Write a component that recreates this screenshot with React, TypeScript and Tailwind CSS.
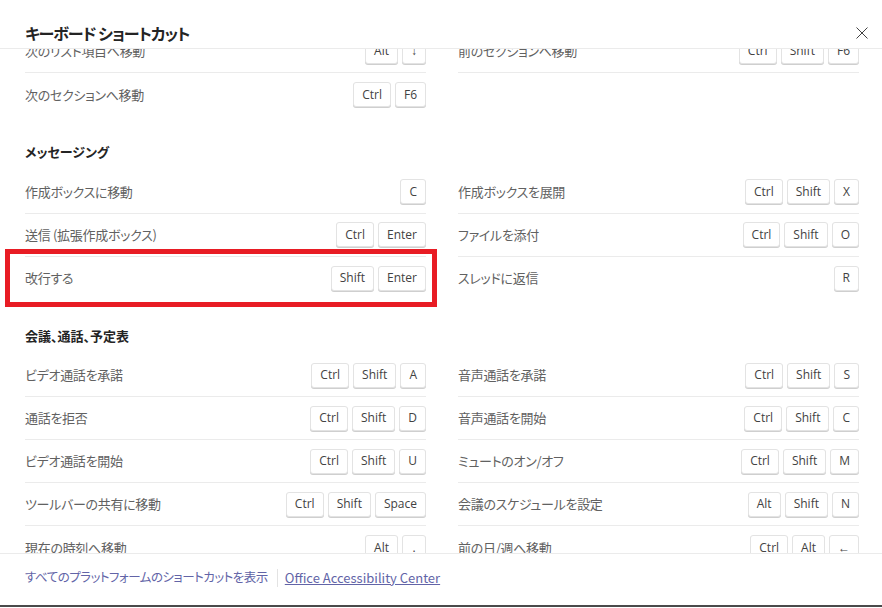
import React from "react";

type Item = { label: string; keys: string[]; highlight?: boolean };
type Section = { title?: string; items: Item[] };

const sections: Section[] = [
  {
    items: [
      { label: "次のリスト項目へ移動", keys: ["Alt", "↓"] },
      { label: "前のセクションへ移動", keys: ["Ctrl", "Shift", "F6"] },
      { label: "次のセクションへ移動", keys: ["Ctrl", "F6"] },
    ],
  },
  {
    title: "メッセージング",
    items: [
      { label: "作成ボックスに移動", keys: ["C"] },
      { label: "作成ボックスを展開", keys: ["Ctrl", "Shift", "X"] },
      { label: "送信 (拡張作成ボックス)", keys: ["Ctrl", "Enter"] },
      { label: "ファイルを添付", keys: ["Ctrl", "Shift", "O"] },
      { label: "改行する", keys: ["Shift", "Enter"], highlight: true },
      { label: "スレッドに返信", keys: ["R"] },
    ],
  },
  {
    title: "会議、通話、予定表",
    items: [
      { label: "ビデオ通話を承諾", keys: ["Ctrl", "Shift", "A"] },
      { label: "音声通話を承諾", keys: ["Ctrl", "Shift", "S"] },
      { label: "通話を拒否", keys: ["Ctrl", "Shift", "D"] },
      { label: "音声通話を開始", keys: ["Ctrl", "Shift", "C"] },
      { label: "ビデオ通話を開始", keys: ["Ctrl", "Shift", "U"] },
      { label: "ミュートのオン/オフ", keys: ["Ctrl", "Shift", "M"] },
      { label: "ツールバーの共有に移動", keys: ["Ctrl", "Shift", "Space"] },
      { label: "会議のスケジュールを設定", keys: ["Alt", "Shift", "N"] },
      { label: "現在の時刻へ移動", keys: ["Alt", "."] },
      { label: "前の日/週へ移動", keys: ["Ctrl", "Alt", "←"] },
    ],
  },
];

function Key({ k }: { k: string }) {
  return (
    <span className="inline-flex h-[25px] min-w-[24px] items-center justify-center rounded-[3px] border border-[#e3e3e3] bg-white px-[8px] font-['Open_Sans',sans-serif] text-[12px] text-[#424242] shadow-[0_1px_0_#cfcfcf]">
      {k}
    </span>
  );
}

function Row({ item, last }: { item: Item; last: boolean }) {
  return (
    <div
      className={`relative flex h-[43px] items-center justify-between ${
        last ? "" : "border-b border-[#ebebeb]"
      }`}
    >
      <span className="text-[13px] tracking-[-0.3px] text-[#616161]">{item.label}</span>
      <div className="flex items-center gap-[4px]">
        {item.keys.map((k, i) => (
          <Key key={i} k={k} />
        ))}
      </div>
      {item.highlight && (
        <div className="pointer-events-none absolute -left-[20px] -right-[11px] -top-[8px] -bottom-[7px] border-[5px] border-[#e81c24]" />
      )}
    </div>
  );
}

export default function App() {
  return (
    <div className="flex h-[608px] w-[882px] flex-col overflow-hidden bg-white font-['Noto_Sans_CJK_JP',sans-serif] [font-feature-settings:'palt']">
      <div className="flex h-[49px] shrink-0 items-start justify-between border-b border-[#ebebeb] pl-[25px] pr-[14px] pt-[21px]">
        <h1 className="text-[16px] font-bold leading-[24px] tracking-[-1px] text-[#242424]">
          キーボード ショートカット
        </h1>
        <button className="mt-[6px] text-[#424242]" aria-label="閉じる">
          <svg width="12" height="12" viewBox="0 0 12 12">
            <path d="M0.5 0.5 L11.5 11.5 M11.5 0.5 L0.5 11.5" stroke="currentColor" strokeWidth="1" fill="none" />
          </svg>
        </button>
      </div>
      <div className="h-[504px] shrink-0 overflow-hidden pl-[25px] pr-[23px]">
        <div className="-mt-[19px]">
          {sections.map((s, si) => {
            const rows = Math.ceil(s.items.length / 2);
            return (
              <div key={si}>
                {s.title && (
                  <h2 className="mb-[8.5px] mt-[26px] h-[20px] text-[13px] font-bold leading-[20px] text-[#242424]">
                    {s.title}
                  </h2>
                )}
                <div className="grid grid-cols-2 gap-x-[32px]">
                  {s.items.map((it, i) => (
                    <Row key={i} item={it} last={Math.floor(i / 2) === rows - 1} />
                  ))}
                </div>
              </div>
            );
          })}
        </div>
      </div>
      <div className="flex h-[47px] shrink-0 items-center border-t border-[#ebebeb] pl-[25px] pt-[1px] text-[13px] text-[#6264a7]">
        <a className="cursor-pointer text-[12.5px] tracking-[-0.5px]">すべてのプラットフォームのショートカットを表示</a>
        <span className="ml-[9px] mr-[7px] h-[18px] w-[1px] bg-[#e3e3e3]" />
        <a className="cursor-pointer underline">Office Accessibility Center</a>
      </div>
      <div className="h-[5px] shrink-0 bg-white" />
      <div className="h-[2px] shrink-0 bg-[#4a4a4a]" />
    </div>
  );
}
